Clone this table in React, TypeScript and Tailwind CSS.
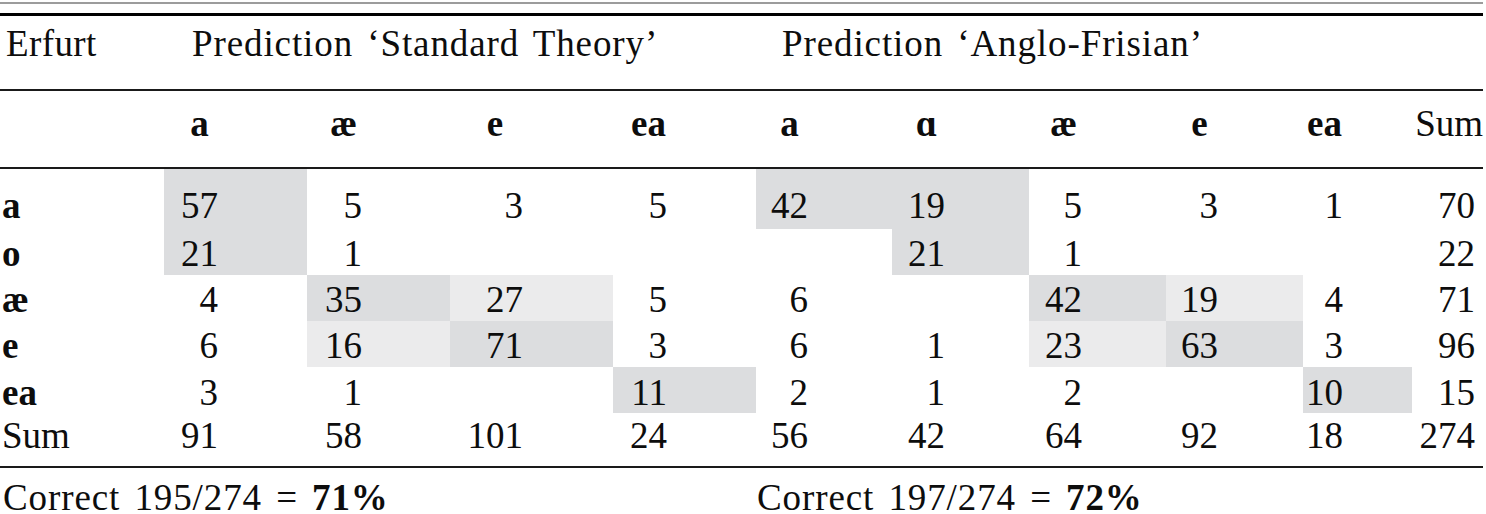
import React from "react";

const D = "bg-[#dcdddf]";
const L = "bg-[#ebebec]";

const cols = [
  { ml: "ml-[17px]", w: "w-[37px]" },
  { ml: "ml-[18px]", w: "w-[37px]" },
  { ml: "ml-[17px]", w: "w-[56px]" },
  { ml: "ml-[17px]", w: "w-[37px]" },
  { ml: "ml-[15px]", w: "w-[37px]" },
  { ml: "ml-[16px]", w: "w-[37px]" },
  { ml: "ml-[16px]", w: "w-[37px]" },
  { ml: "ml-[15px]", w: "w-[37px]" },
  { ml: "ml-[3px]", w: "w-[37px]" },
];

const heads = ["a", "æ", "e", "ea", "a", "ɑ", "æ", "e", "ea"];

type Row = { label: string; bold: boolean; vals: string[]; sum: string; shade: Record<number, string> };

const rows: Row[] = [
  { label: "a", bold: true, vals: ["57", "5", "3", "5", "42", "19", "5", "3", "1"], sum: "70", shade: { 0: D, 4: D, 5: D } },
  { label: "o", bold: true, vals: ["21", "1", "", "", "", "21", "1", "", ""], sum: "22", shade: { 0: D, 5: D } },
  { label: "æ", bold: true, vals: ["4", "35", "27", "5", "6", "", "42", "19", "4"], sum: "71", shade: { 1: D, 2: L, 6: D, 7: L } },
  { label: "e", bold: true, vals: ["6", "16", "71", "3", "6", "1", "23", "63", "3"], sum: "96", shade: { 1: L, 2: D, 6: L, 7: D } },
  { label: "ea", bold: true, vals: ["3", "1", "", "11", "2", "1", "2", "", "10"], sum: "15", shade: { 3: D, 8: D } },
  { label: "Sum", bold: false, vals: ["91", "58", "101", "24", "56", "42", "64", "92", "18"], sum: "274", shade: {} },
];

const rowCls = [
  "h-[60px] pt-[17px]",
  "h-[46px] pt-[5px]",
  "h-[46px] pt-[5px]",
  "h-[46px] pt-[5px]",
  "h-[46px] pt-[6px]",
  "h-[53px] pt-[3px]",
];

const grid =
  "grid grid-cols-[164px_143px_143px_163px_143px_136px_137px_137px_137px_109px_71px]";

export default function App() {
  return (
    <div className="w-[1486px] h-[514px] overflow-hidden bg-white text-[#0d0d0d] font-['Liberation_Serif','DejaVu_Serif',serif] text-[37px]">
      <div className="w-[1483px]">
        <div className="h-[2px]" />
        <div className="h-[2px] bg-[#9c9c9c]" />
        <div className="h-[9px]" />
        <div className="h-[3px] bg-black" />
        {/* header row 1 */}
        <div className={`${grid} h-[73px] pt-[5px] leading-[46px]`}>
          <div className="pl-[6px] tracking-[0.4px]">Erfurt</div>
          <div className="col-span-4 pl-[28px] whitespace-nowrap tracking-[0.9px] [word-spacing:4px]">
            Prediction ‘Standard Theory’
          </div>
          <div className="col-span-6 pl-[26px] whitespace-nowrap tracking-[0.9px] [word-spacing:4px]">
            Prediction ‘Anglo-Frisian’
          </div>
        </div>
        <div className="h-[2px] bg-[#1a1a1a]" />
        {/* header row 2 */}
        <div className={`${grid} h-[76px] pt-[10px] leading-[46px]`}>
          <div />
          {heads.map((h, i) => (
            <div key={i}>
              <div className={`${cols[i].ml} ${cols[i].w} text-center font-bold whitespace-nowrap`}>{h}</div>
            </div>
          ))}
          <div className="text-right">Sum</div>
        </div>
        <div className="h-[2px] bg-[#1a1a1a]" />
        {/* data rows */}
        {rows.map((r, ri) => (
          <div key={ri} className={grid}>
            <div className={`${rowCls[ri]} leading-[40px] pl-[2px] ${r.bold ? "font-bold" : ""}`}>{r.label}</div>
            {r.vals.map((v, ci) => (
              <div key={ci} className={`${rowCls[ri]} leading-[40px] ${r.shade[ci] ?? ""}`}>
                <div className={`${cols[ci].ml} ${cols[ci].w} text-right whitespace-nowrap`}>{v}</div>
              </div>
            ))}
            <div className={`${rowCls[ri]} leading-[40px] text-right pr-[8px]`}>{r.sum}</div>
          </div>
        ))}
        <div className="h-[2px] bg-[#1a1a1a]" />
        {/* footer */}
        <div className={`${grid} pt-[10px] leading-[40px]`}>
          <div className="col-span-5 pl-[3px] whitespace-nowrap tracking-[0.9px] [word-spacing:4px]">
            Correct 195/274 = <span className="font-bold">71%</span>
          </div>
          <div className="col-span-6 pl-[1px] whitespace-nowrap tracking-[0.9px] [word-spacing:4px]">
            Correct 197/274 = <span className="font-bold">72%</span>
          </div>
        </div>
      </div>
    </div>
  );
}
